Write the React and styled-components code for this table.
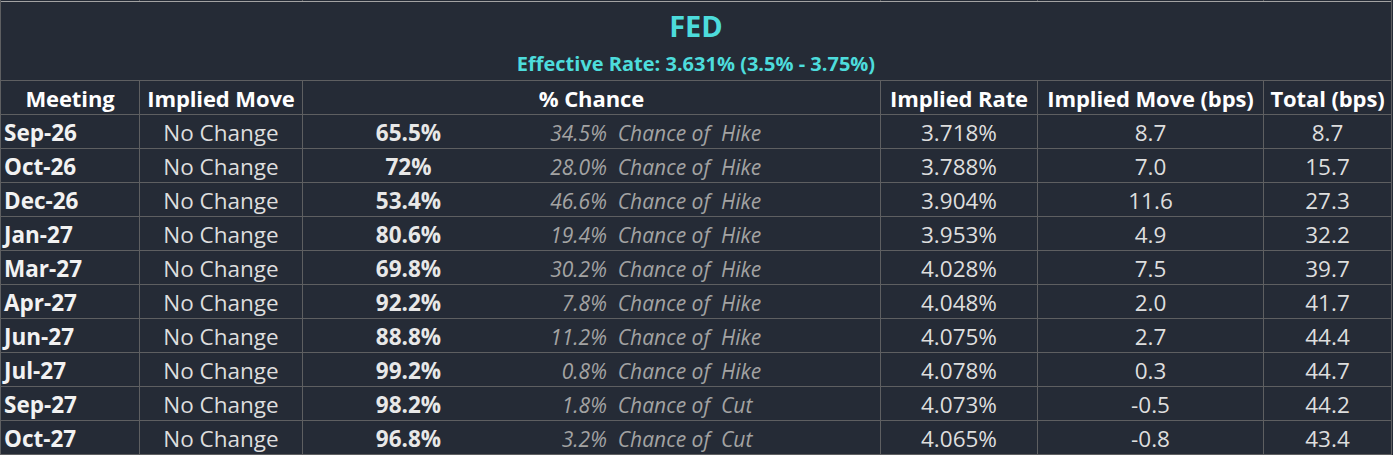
import React from 'react'
import styled, { createGlobalStyle } from 'styled-components'

const GlobalStyle = createGlobalStyle`
    html, body {
        margin: 0;
        padding: 0;
        background: #252b36;
    }
    body {
        font-family: 'Open Sans', 'Noto Sans', sans-serif;
    }
`

const rows = [
    { meeting: 'Sep-26', pct: '65.5%', other: '34.5%', move: 'Hike', rate: '3.718%', bps: '8.7', total: '8.7' },
    { meeting: 'Oct-26', pct: '72%', other: '28.0%', move: 'Hike', rate: '3.788%', bps: '7.0', total: '15.7' },
    { meeting: 'Dec-26', pct: '53.4%', other: '46.6%', move: 'Hike', rate: '3.904%', bps: '11.6', total: '27.3' },
    { meeting: 'Jan-27', pct: '80.6%', other: '19.4%', move: 'Hike', rate: '3.953%', bps: '4.9', total: '32.2' },
    { meeting: 'Mar-27', pct: '69.8%', other: '30.2%', move: 'Hike', rate: '4.028%', bps: '7.5', total: '39.7' },
    { meeting: 'Apr-27', pct: '92.2%', other: '7.8%', move: 'Hike', rate: '4.048%', bps: '2.0', total: '41.7' },
    { meeting: 'Jun-27', pct: '88.8%', other: '11.2%', move: 'Hike', rate: '4.075%', bps: '2.7', total: '44.4' },
    { meeting: 'Jul-27', pct: '99.2%', other: '0.8%', move: 'Hike', rate: '4.078%', bps: '0.3', total: '44.7' },
    { meeting: 'Sep-27', pct: '98.2%', other: '1.8%', move: 'Cut', rate: '4.073%', bps: '-0.5', total: '44.2' },
    { meeting: 'Oct-27', pct: '96.8%', other: '3.2%', move: 'Cut', rate: '4.065%', bps: '-0.8', total: '43.4' },
]

const Sheet = styled.div`
    display: grid;
    grid-template-columns: 138px 162px 577px 156px 225px 127px;
    grid-template-rows: 1px 78px repeat(11, 33px);
    gap: 1px;
    width: 1392px;
    padding: 0 1px 1px 1px;
    box-sizing: border-box;
    background: #5e5f61;
`

const Stub = styled.div`
    background: #252b36;
`

const TitleBlock = styled.div`
    grid-column: 1 / -1;
    background: #252b36;
    box-shadow: 0 -1px 0 #a3a3a3;
    display: flex;
    flex-direction: column;
    align-items: center;
    color: #4ddcdc;
    font-weight: 700;
`

const Title = styled.div`
    font-size: 29px;
    line-height: 30px;
    margin-top: 9px;
`

const Subtitle = styled.div`
    font-size: 20px;
    line-height: 22px;
    margin-top: 12px;
`

// one spreadsheet cell; $align left for the meeting column, $bold for bold values
const Cell = styled.div`
    background: #252b36;
    display: flex;
    align-items: flex-end;
    justify-content: ${p => p.$align === 'left' ? 'flex-start' : 'center'};
    padding-left: ${p => p.$align === 'left' ? '3px' : '0'};
    padding-bottom: 2px;
    box-sizing: border-box;
    font-size: 22.5px;
    line-height: 26px;
    white-space: nowrap;
    color: ${p => p.$bold ? '#f2f2f2' : '#dedede'};
    font-weight: ${p => p.$bold ? 700 : 400};
`

const HeadCell = styled(Cell)`
    color: #ffffff;
    font-weight: 700;
    font-size: 22px;
    letter-spacing: -0.1px;
    padding-bottom: 3px;
`

const ChanceCell = styled.div`
    background: #252b36;
    display: grid;
    grid-template-columns: 211px 196px 1fr;
    align-items: end;
    padding-bottom: 2px;
    box-sizing: border-box;
    font-size: 21px;
    line-height: 26px;
    white-space: nowrap;
`

const Pct = styled.span`
    text-align: center;
    font-size: 22.5px;
    font-weight: 700;
    color: #e8e8e8;
`

const Phrase = styled.span`
    text-align: right;
    font-style: italic;
    color: #a3a3a3;
`

const Move = styled.span`
    padding-left: 11px;
    font-style: italic;
    color: #a3a3a3;
`

export default function App() {
    return (
        <>
            <GlobalStyle />
            <Sheet>
                {[0, 1, 2, 3, 4, 5].map(i => <Stub key={i} />)}
                <TitleBlock>
                    <Title>FED</Title>
                    <Subtitle>Effective Rate: 3.631% (3.5% - 3.75%)</Subtitle>
                </TitleBlock>
                <HeadCell>Meeting</HeadCell>
                <HeadCell>Implied Move</HeadCell>
                <HeadCell>% Chance</HeadCell>
                <HeadCell>Implied Rate</HeadCell>
                <HeadCell>Implied Move (bps)</HeadCell>
                <HeadCell>Total (bps)</HeadCell>
                {rows.map(r => (
                    <React.Fragment key={r.meeting}>
                        <Cell $align="left" $bold>{r.meeting}</Cell>
                        <Cell>No Change</Cell>
                        <ChanceCell>
                            <Pct>{r.pct}</Pct>
                            <Phrase>{r.other}&nbsp; Chance of</Phrase>
                            <Move>{r.move}</Move>
                        </ChanceCell>
                        <Cell>{r.rate}</Cell>
                        <Cell>{r.bps}</Cell>
                        <Cell>{r.total}</Cell>
                    </React.Fragment>
                ))}
            </Sheet>
        </>
    )
}
